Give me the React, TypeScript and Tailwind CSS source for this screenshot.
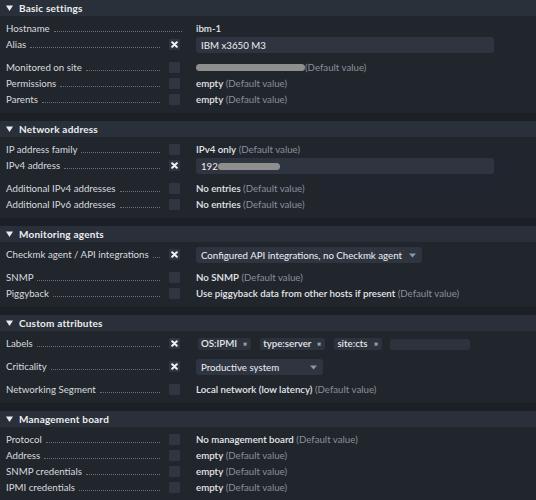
import React from "react";

type Row = {
  label: string;
  kind: "plain" | "input";
  checkbox?: "on" | "off" | "none";
  value: React.ReactNode;
};

const Default = () => <span className="font-normal text-[#8a9099]"> (Default value)</span>;

function Val({ main }: { main: string }) {
  return (
    <span className="font-semibold text-[#e4e7ea] whitespace-nowrap">
      {main}
      <Default />
    </span>
  );
}

function Checkbox({ state }: { state: "on" | "off" }) {
  return (
    <div className="w-[11px] h-[11px] rounded-[1px] bg-[#2f3641] flex items-center justify-center">
      {state === "on" && (
        <svg width="7" height="7" viewBox="0 0 7 7">
          <path d="M1.2 1.2 L5.8 5.8 M5.8 1.2 L1.2 5.8" stroke="#f4f4f4" strokeWidth="2" strokeLinecap="round" />
        </svg>
      )}
    </div>
  );
}

function Arrow() {
  return (
    <svg width="7" height="5" viewBox="0 0 7 5" className="ml-auto">
      <path d="M0 0.5 L7 0.5 L3.5 4.5 Z" fill="#8f96a0" />
    </svg>
  );
}

function Chip({ text }: { text: string }) {
  return (
    <div className="h-[12px] flex items-center gap-[6px] pl-[3px] pr-[4px] rounded-[2px] bg-[#2c333d] font-semibold text-[#e4e7ea] leading-none">
      <span>{text}</span>
      <span className="text-[5px] text-[#9aa0a8]">✖</span>
    </div>
  );
}

const sections: { title: string; rows: Row[] }[] = [
  {
    title: "Basic settings",
    rows: [
      { label: "Hostname", kind: "plain", checkbox: "none", value: <span className="font-semibold text-[#e4e7ea]">ibm-1</span> },
      {
        label: "Alias",
        kind: "input",
        checkbox: "on",
        value: (
          <div className="w-[298px] h-4 rounded-[3px] bg-[#2e3541] px-[5px] text-[#eef0f2] leading-4">IBM x3650 M3</div>
        ),
      },
      {
        label: "Monitored on site",
        kind: "plain",
        checkbox: "off",
        value: (
          <div className="flex items-center">
            <div className="w-[109px] h-[7px] rounded-full bg-[#8e8e8e]" />
            <span className="text-[#8a9099]">(Default value)</span>
          </div>
        ),
      },
      { label: "Permissions", kind: "plain", checkbox: "off", value: <Val main="empty" /> },
      { label: "Parents", kind: "plain", checkbox: "off", value: <Val main="empty" /> },
    ],
  },
  {
    title: "Network address",
    rows: [
      { label: "IP address family", kind: "plain", checkbox: "off", value: <Val main="IPv4 only" /> },
      {
        label: "IPv4 address",
        kind: "input",
        checkbox: "on",
        value: (
          <div className="w-[298px] h-4 rounded-[3px] bg-[#2e3541] pl-[5px] flex items-center text-[#eef0f2]">
            <span>192</span>
            <div className="w-[62px] h-[7px] rounded-full bg-[#8e8e8e]" />
          </div>
        ),
      },
      { label: "Additional IPv4 addresses", kind: "plain", checkbox: "off", value: <Val main="No entries" /> },
      { label: "Additional IPv6 addresses", kind: "plain", checkbox: "off", value: <Val main="No entries" /> },
    ],
  },
  {
    title: "Monitoring agents",
    rows: [
      {
        label: "Checkmk agent / API integrations",
        kind: "input",
        checkbox: "on",
        value: (
          <div className="w-[226px] h-4 rounded-[3px] bg-[#2e3541] pl-[5px] pr-[6px] flex items-center text-[#eef0f2]">
            <span>Configured API integrations, no Checkmk agent</span>
            <Arrow />
          </div>
        ),
      },
      { label: "SNMP", kind: "plain", checkbox: "off", value: <Val main="No SNMP" /> },
      {
        label: "Piggyback",
        kind: "plain",
        checkbox: "off",
        value: <Val main="Use piggyback data from other hosts if present" />,
      },
    ],
  },
  {
    title: "Custom attributes",
    rows: [
      {
        label: "Labels",
        kind: "input",
        checkbox: "on",
        value: (
          <div className="h-4 flex items-center pl-[2px] gap-[9px]">
            <Chip text="OS:IPMI" />
            <Chip text="type:server" />
            <Chip text="site:cts" />
            <div className="w-[80px] h-[11px] rounded-[3px] bg-[#2c333d] -ml-[1px]" />
          </div>
        ),
      },
      {
        label: "Criticality",
        kind: "input",
        checkbox: "on",
        value: (
          <div className="w-[127px] h-4 rounded-[3px] bg-[#2e3541] pl-[5px] pr-[6px] flex items-center text-[#eef0f2]">
            <span>Productive system</span>
            <Arrow />
          </div>
        ),
      },
      { label: "Networking Segment", kind: "plain", checkbox: "off", value: <Val main="Local network (low latency)" /> },
    ],
  },
  {
    title: "Management board",
    rows: [
      { label: "Protocol", kind: "plain", checkbox: "off", value: <Val main="No management board" /> },
      { label: "Address", kind: "plain", checkbox: "off", value: <Val main="empty" /> },
      { label: "SNMP credentials", kind: "plain", checkbox: "off", value: <Val main="empty" /> },
      { label: "IPMI credentials", kind: "plain", checkbox: "off", value: <Val main="empty" /> },
    ],
  },
];

function FormRow({ row }: { row: Row }) {
  const noBox = row.checkbox === "none";
  return (
    <div className={row.kind === "input" ? "flex items-start h-[23px]" : "flex items-start h-4"}>
      <div className={noBox ? "flex items-end h-4 w-[176px] ml-[6px]" : "flex items-end h-4 w-[154px] ml-[6px]"}>
        <span className="whitespace-nowrap text-[#d8dbdf]">{row.label}</span>
        <span className="flex-1 ml-[4px] mb-[4px] border-b border-dotted border-[#6a717b]" />
      </div>
      {!noBox && (
        <div className="ml-[9px] mt-[3px]">
          <Checkbox state={row.checkbox === "on" ? "on" : "off"} />
        </div>
      )}
      <div className={noBox ? "ml-[14px] h-4 leading-4 flex items-center" : "ml-[16px] h-4 leading-4 flex items-center"}>
        {row.kind === "input" ? <div className="mt-[2px]">{row.value}</div> : row.value}
      </div>
    </div>
  );
}

export default function App() {
  return (
    <div
      className="w-[536px] h-[500px] overflow-hidden bg-[#1c2026] flex flex-col gap-2 text-[9.7px] leading-4"
      style={{ fontFamily: "Lato, 'Noto Sans', sans-serif" }}
    >
      {sections.map((s) => (
        <section key={s.title} className="bg-[#21262d]">
          <div className="h-4 bg-[#2a3039] flex items-center pl-[6px] gap-[6px]">
            <svg width="7" height="6" viewBox="0 0 7 6">
              <path d="M0 0.5 L7 0.5 L3.5 6 Z" fill="#e9ebee" />
            </svg>
            <span className="font-bold text-[10px] text-[#eceef0] tracking-[0.2px]">{s.title}</span>
          </div>
          <div className="pt-1 pb-1.5">
            {s.rows.map((r) => (
              <FormRow key={r.label} row={r} />
            ))}
          </div>
        </section>
      ))}
    </div>
  );
}
